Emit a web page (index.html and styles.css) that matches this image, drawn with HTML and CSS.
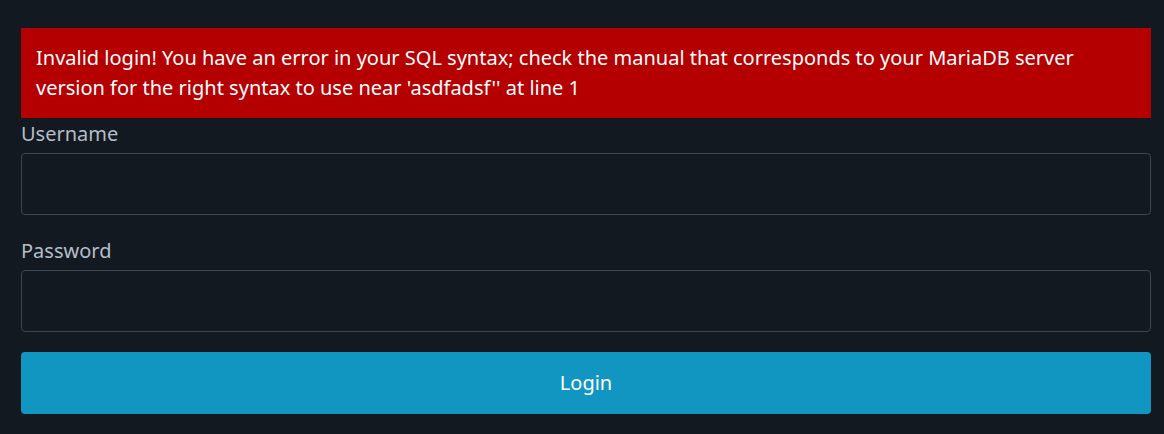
FILE: index.html
```html
<!DOCTYPE html>
<html lang="en">
<head>
<meta charset="utf-8">
<title>Login</title>
<link rel="stylesheet" href="styles.css">
</head>
<body>
<main class="page">
  <form class="login">
    <div class="alert">Invalid login! You have an error in your SQL syntax; check the manual that corresponds to your MariaDB server version for the right syntax to use near 'asdfadsf'' at line 1</div>
    <div class="field">
      <label class="label" for="username">Username</label>
      <input class="input" id="username" type="text">
    </div>
    <div class="field">
      <label class="label" for="password">Password</label>
      <input class="input" id="password" type="password">
    </div>
    <button class="btn" type="button">Login</button>
  </form>
</main>
</body>
</html>
```

FILE: styles.css
```css
html, body {
  margin: 0;
  padding: 0;
  background: #131920;
}
body {
  font-family: "Noto Sans", "Open Sans", sans-serif;
  font-size: 20px;
  line-height: 30px;
  color: #b4bec8;
}
.page {
  padding: 28px 13px 20px 21px;
}
.login {
  display: flex;
  flex-direction: column;
}
.alert {
  background: #b40000;
  color: #ffffff;
  padding: 15px 15px;
}
.field {
  display: flex;
  flex-direction: column;
  margin-top: 1px;
  margin-bottom: 20px;
}
.label {
  color: #b4bec8;
  margin-bottom: 4px;
}
.input {
  box-sizing: border-box;
  height: 62px;
  background: #131920;
  border: 1px solid #3b4652;
  border-radius: 4px;
  font: inherit;
  color: #ffffff;
  padding: 0 15px;
}
.btn {
  height: 62px;
  background: #1196c2;
  border: none;
  border-radius: 4px;
  color: #ffffff;
  font: inherit;
}
```
